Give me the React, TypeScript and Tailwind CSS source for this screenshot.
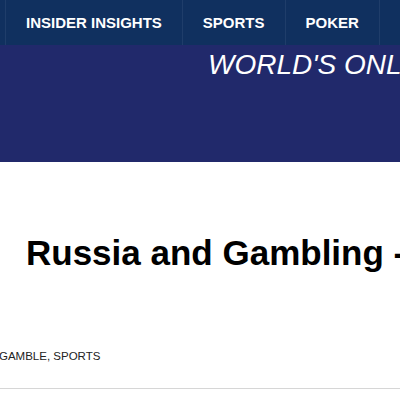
import React from "react";

export default function App() {
  const items = ["INSIDER INSIGHTS", "SPORTS", "POKER"];
  return (
    <div className="w-[400px] h-[400px] overflow-hidden bg-white" style={{ fontFamily: '"Liberation Sans", Arial, sans-serif' }}>
      <nav className="h-[45px] bg-[#10305f] flex pl-[5px] overflow-hidden">
        {items.map((t) => (
          <div key={t} className="h-full border-l border-[#1f3d6a] px-5 pt-[2px] flex items-center text-white font-bold text-[15px] whitespace-nowrap">
            {t}
          </div>
        ))}
        <div className="h-full border-l border-[#1f3d6a] w-5 shrink-0" />
      </nav>
      <div className="h-[117px] bg-[#21296b] overflow-hidden pl-[208px] pt-[4px]">
        <div className="text-white italic text-[28px] leading-[32px] whitespace-nowrap">WORLD'S ONLINE GAMBLING AUTHORITY</div>
      </div>
      <div className="pt-[71px] pl-[26px] overflow-hidden">
        <h1 className="text-[35px] leading-[40px] font-bold text-black whitespace-nowrap">Russia and Gambling - Is It Legal?</h1>
      </div>
      <div className="pt-[76px] text-[11.5px] leading-[14px] text-[#222] -ml-[1px] whitespace-nowrap">GAMBLE, SPORTS</div>
      <div className="mt-[25px] border-t border-[#d6d6d6]" />
    </div>
  );
}
